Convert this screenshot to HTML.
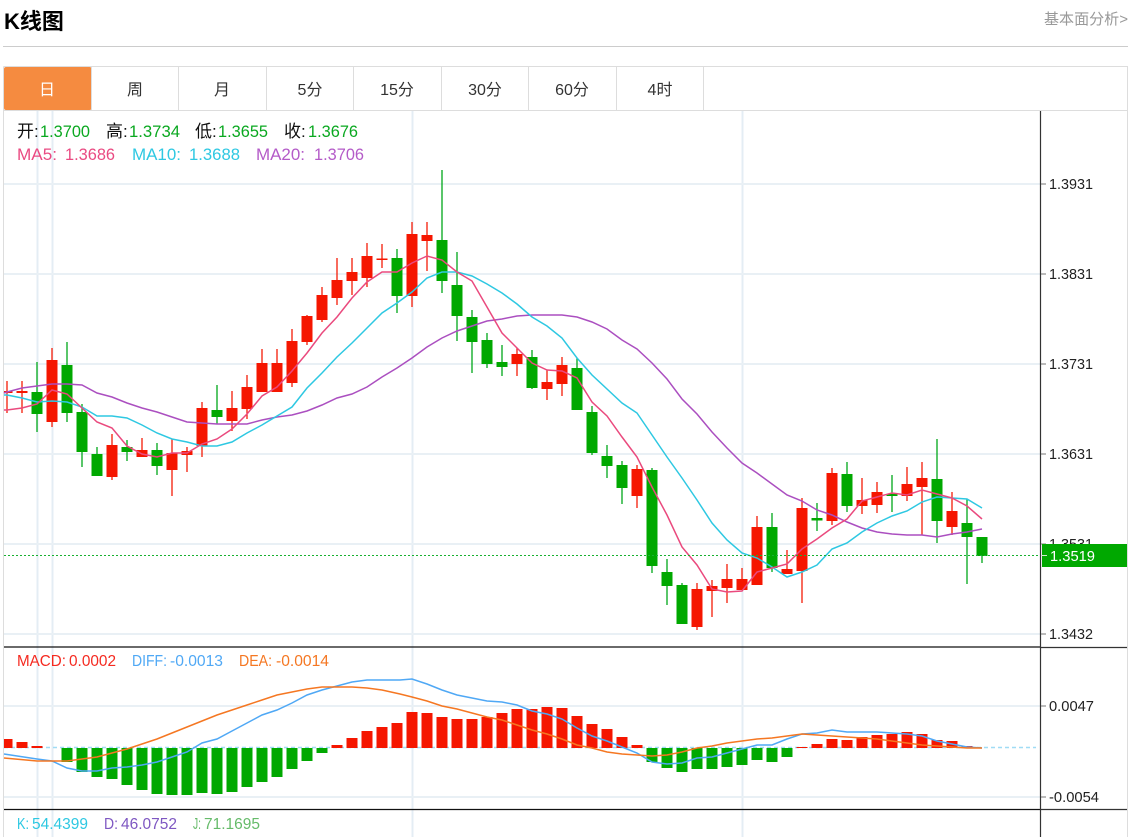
<!DOCTYPE html>
<html lang="zh">
<head>
<meta charset="utf-8">
<title>K线图</title>
<style>
html,body{margin:0;padding:0;background:#fff;width:1142px;height:837px;overflow:hidden}
svg{display:block;position:absolute;left:0;top:0}
text{font-family:"Liberation Sans","Noto Sans CJK SC",sans-serif}
.t{font-size:16px;fill:#333;text-anchor:middle}
.a{font-size:15px;fill:#222}
.r1{font-size:17px}
.m{font-size:16px}
.soft{filter:blur(.3px)}
</style>
</head>
<body>
<svg width="1142" height="837" viewBox="0 0 1142 837" xmlns="http://www.w3.org/2000/svg">
<!-- header -->
<text x="4" y="29" font-size="22" font-weight="700" fill="#000">K线图</text>
<text x="1044" y="24" font-size="15" fill="#999" textLength="84" lengthAdjust="spacingAndGlyphs">基本面分析&gt;</text>
<rect x="3" y="46" width="1125" height="1" fill="#ccc"/>

<!-- frame -->
<path d="M3.5 66.5H1127.5V837M3.5 66.5V837M4 110.5H1127" fill="none" stroke="#ddd" stroke-width="1"/>
<rect x="4" y="67" width="87.5" height="43" rx="2" fill="#f58b40"/>
<path d="M91.5 67V110M178.5 67V110M266.5 67V110M353.5 67V110M441.5 67V110M528.5 67V110M616.5 67V110M703.5 67V110" stroke="#ddd" stroke-width="1"/>
<text class="t" x="47" y="95" style="fill:#fff">日</text>
<text class="t" x="135" y="95">周</text>
<text class="t" x="222" y="95">月</text>
<text class="t" x="310" y="95">5分</text>
<text class="t" x="397" y="95">15分</text>
<text class="t" x="485" y="95">30分</text>
<text class="t" x="572" y="95">60分</text>
<text class="t" x="660" y="95">4时</text>

<!-- grid -->
<path d="M37.5 111V837M52.5 111V837M412.5 111V837M742.5 111V837" stroke="#e4edf4" stroke-width="2" fill="none"/>
<path d="M4 184H1040M4 274H1040M4 364H1040M4 454H1040M4 544H1040M4 634H1040M4 706H1040M4 797H1040" stroke="#e9f0f5" stroke-width="2" fill="none"/>

<g class="soft">
<!-- candles -->
<path fill="none" stroke="#f51c08" stroke-width="1.3" d="M7 381V413M22 381V413M52 348V427M112 434V480M142 438V457M172 439V496M187 447V472M202 402V457M232 391V431M247 375V419M262 349V392M277 349V392M292 329V387M307 315V345M322 287V322M337 258V305M352 258V295M367 243V287M382 244V268M412 222V307M427 222V271M517 348V376M547 370V400M562 357V396M637 465V508M697 583V630M712 580V617M727 564V603M742 568V590M757 516V585M787 550V574M802 498V603M832 468V525M862 478V514M877 482V513M907 467V501M922 462V535M952 492V535"/>
<path fill="none" stroke="#00a81a" stroke-width="1.3" d="M37 362V432M67 342V422M82 404V467M97 447V476M127 440V461M157 443V475M217 385V424M397 249V313M442 170V293M457 252V341M472 310V373M487 333V368M502 345V376M532 350V389M577 358V410M592 406V455M607 445V478M622 461V504M652 468V573M667 559V605M682 583V624M772 513V572M817 503V531M847 462V512M892 475V512M937 439V543M967 499V584M982 537V563"/>
<path fill="#f51600" d="M4 391h8.5v2h-8.5zM16.5 391h11v2h-11zM46.5 360h11v62h-11zM106.5 445h11v32h-11zM136.5 450h11v7h-11zM166.5 453h11v17h-11zM181.5 451h11v4h-11zM196.5 408h11v38h-11zM226.5 408h11v13h-11zM241.5 387h11v22h-11zM256.5 363h11v29h-11zM271.5 363h11v29h-11zM286.5 341h11v42h-11zM301.5 316h11v26h-11zM316.5 295h11v25h-11zM331.5 280h11v18h-11zM346.5 272h11v9h-11zM361.5 256h11v22h-11zM376.5 258.5h11v1.5h-11zM406.5 234h11v62h-11zM421.5 235h11v6h-11zM511.5 354h11v10h-11zM541.5 382h11v7h-11zM556.5 365h11v19h-11zM631.5 469h11v27h-11zM691.5 589h11v38h-11zM706.5 586h11v5h-11zM721.5 579h11v9h-11zM736.5 579h11v11h-11zM751.5 527h11v58h-11zM781.5 569h11v5h-11zM796.5 508h11v63h-11zM826.5 473h11v48h-11zM856.5 500h11v6h-11zM871.5 492h11v13h-11zM901.5 484h11v12h-11zM916.5 478h11v9h-11zM946.5 511h11v16h-11z"/>
<path fill="#00a800" d="M31.5 392h11v22h-11zM61.5 365h11v48h-11zM76.5 412h11v40h-11zM91.5 454h11v22h-11zM121.5 447h11v5h-11zM151.5 450h11v16h-11zM211.5 410h11v7h-11zM391.5 258h11v38h-11zM436.5 240h11v41h-11zM451.5 285h11v31h-11zM466.5 317h11v25h-11zM481.5 340h11v24h-11zM496.5 362h11v5h-11zM526.5 357h11v31h-11zM571.5 368h11v42h-11zM586.5 412h11v41h-11zM601.5 456h11v10h-11zM616.5 465h11v23h-11zM646.5 470h11v96h-11zM661.5 572h11v14h-11zM676.5 585h11v39h-11zM766.5 527h11v41h-11zM811.5 518h11v2.5h-11zM841.5 474h11v32h-11zM886.5 494h11v2h-11zM931.5 479h11v42h-11zM961.5 523h11v14h-11zM976.5 537h11v19h-11z"/>

<!-- MA lines -->
<polyline fill="none" stroke="#ab4fc0" stroke-width="1.5" points="4,393 7,392 22,388 37,386 52,384 67,384 82,385 97,393 112,397 127,403 142,408 157,412 172,417 187,422 202,423 217,424 232,424 247,424 262,420 277,417 292,415 307,411 322,405 337,398 352,394 367,387 382,377 397,368 412,358 427,347 442,338 457,331 472,326 487,321 502,319 517,316 532,315 547,315 562,315 577,317 592,322 607,329 622,340 637,349 652,363 667,379 682,399 697,414 712,432 727,448 742,463 757,473 772,484 787,495 802,501 817,510 832,515 847,522 862,528 877,532 892,534 907,535 922,535 937,537 952,534 967,532 982,529"/>
<polyline fill="none" stroke="#2ec8e2" stroke-width="1.5" points="4,395 7,395 22,398 37,402 52,401 67,402 82,407 97,416 112,416 127,418 142,425 157,433 172,439 187,442 202,446 217,446 232,442 247,433 262,425 277,416 292,407 307,388 322,373 337,357 352,343 367,328 382,313 397,303 412,292 427,278 442,272 457,272 472,276 487,284 502,293 517,304 532,317 547,326 562,338 577,358 592,375 607,389 622,403 637,413 652,435 667,457 682,478 697,500 712,523 727,540 742,553 757,558 772,567 787,577 802,572 817,565 832,549 847,543 862,532 877,523 892,516 907,511 922,502 937,497 952,498 967,499 982,508"/>
<polyline fill="none" stroke="#ea4a7e" stroke-width="1.5" points="4,410 7,410 22,408 37,404 52,390 67,394 82,408 97,422 112,428 127,446 142,454 157,457 172,453 187,453 202,444 217,439 232,429 247,414 262,396 277,387 292,371 307,353 322,333 337,317 352,298 367,282 382,272 397,272 412,263 427,256 442,260 457,272 472,281 487,307 502,333 517,348 532,363 547,370 562,371 577,378 592,402 607,416 622,437 637,457 652,487 667,515 682,547 697,565 712,589 727,592 742,591 757,572 772,568 787,564 802,549 817,539 832,528 847,519 862,501 877,497 892,493 907,495 922,490 937,494 952,498 967,506 982,519"/>

<!-- MACD -->
<path d="M4 747.5H1036" stroke="#a0dcf5" stroke-width="1.5" stroke-dasharray="4 3" fill="none"/>
<path fill="#f51600" d="M4 739h8.5V748H4zM16.5 742h11V748h-11zM31.5 746h11V748h-11zM331.5 745h11V748h-11zM346.5 738h11V748h-11zM361.5 731h11V748h-11zM376.5 727h11V748h-11zM391.5 723h11V748h-11zM406.5 712h11V748h-11zM421.5 713h11V748h-11zM436.5 717h11V748h-11zM451.5 719h11V748h-11zM466.5 719h11V748h-11zM481.5 717h11V748h-11zM496.5 713h11V748h-11zM511.5 709h11V748h-11zM526.5 709h11V748h-11zM541.5 707h11V748h-11zM556.5 708h11V748h-11zM571.5 716h11V748h-11zM586.5 724h11V748h-11zM601.5 729h11V748h-11zM616.5 737h11V748h-11zM631.5 745h11V748h-11zM796.5 747h11V748h-11zM811.5 744h11V748h-11zM826.5 739h11V748h-11zM841.5 740h11V748h-11zM856.5 737h11V748h-11zM871.5 735h11V748h-11zM886.5 734h11V748h-11zM901.5 732h11V748h-11zM916.5 734h11V748h-11zM931.5 740h11V748h-11zM946.5 741h11V748h-11zM961.5 746h11V748h-11z"/>
<path fill="#00a800" d="M61.5 748h11V762h-11zM76.5 748h11V772h-11zM91.5 748h11V777h-11zM106.5 748h11V779h-11zM121.5 748h11V785h-11zM136.5 748h11V790h-11zM151.5 748h11V794h-11zM166.5 748h11V795h-11zM181.5 748h11V795h-11zM196.5 748h11V793h-11zM211.5 748h11V794h-11zM226.5 748h11V792h-11zM241.5 748h11V787h-11zM256.5 748h11V782h-11zM271.5 748h11V777h-11zM286.5 748h11V769h-11zM301.5 748h11V761h-11zM316.5 748h11V753h-11zM646.5 748h11V762h-11zM661.5 748h11V768h-11zM676.5 748h11V772h-11zM691.5 748h11V769h-11zM706.5 748h11V769h-11zM721.5 748h11V767h-11zM736.5 748h11V765h-11zM751.5 748h11V760h-11zM766.5 748h11V762h-11zM781.5 748h11V757h-11z"/>
<polyline fill="none" stroke="#4fa8f5" stroke-width="1.5" points="4,754 37,759 52,761 67,768 82,771 97,771 112,768 127,767 142,765 157,762 172,757 187,752 202,743 217,739 232,731 247,723 262,715 277,710 292,703 307,695 322,690 337,686 352,682 367,680 382,680 400,680 412,679 427,684 442,690 457,695 472,698 487,701 502,702 517,705 532,711 547,714 562,719 577,728 592,736 607,741 622,747 637,753 652,762 667,764 682,763 697,758 712,757 727,753 742,749 757,745 772,745 787,739 802,734 817,733 832,730 847,732 862,732 877,732 892,733 907,734 922,736 937,741 952,744 967,747 982,748"/>
<polyline fill="none" stroke="#f57722" stroke-width="1.5" points="4,758 37,761 52,761 67,761 82,759 97,757 112,753 127,749 142,744 157,739 172,733 187,727 202,721 217,715 232,710 247,705 262,700 277,695 292,692 307,689 322,687 337,687 352,687 367,688 382,690 400,694 412,697 427,701 442,706 457,709 472,713 487,717 502,720 517,725 532,730 547,734 562,739 577,745 592,748 607,752 622,754 637,755 652,756 667,755 682,752 697,748 712,746 727,743 742,741 757,739 772,738 787,736 802,734 817,735 832,736 847,737 862,738 877,739 892,741 907,743 922,745 937,746 952,747 967,748 982,748"/>
</g>

<!-- current price dotted -->
<path d="M4 555.5H1040" stroke="#18b030" stroke-width="1" stroke-dasharray="2 2" fill="none"/>

<!-- legend -->
<g class="r1" lengthAdjust="spacingAndGlyphs">
<text x="17" y="137" fill="#111">开:</text><text x="40" y="137" fill="#0aa820" textLength="50" lengthAdjust="spacingAndGlyphs">1.3700</text>
<text x="106" y="137" fill="#111">高:</text><text x="129" y="137" fill="#0aa820" textLength="51" lengthAdjust="spacingAndGlyphs">1.3734</text>
<text x="195" y="137" fill="#111">低:</text><text x="218" y="137" fill="#0aa820" textLength="50" lengthAdjust="spacingAndGlyphs">1.3655</text>
<text x="284" y="137" fill="#111">收:</text><text x="308" y="137" fill="#0aa820" textLength="50" lengthAdjust="spacingAndGlyphs">1.3676</text>
<text x="17" y="160" fill="#ea4a82" textLength="40" lengthAdjust="spacingAndGlyphs">MA5:</text><text x="65" y="160" fill="#ea4a82" textLength="50" lengthAdjust="spacingAndGlyphs">1.3686</text>
<text x="132" y="160" fill="#2ec8e2" textLength="49" lengthAdjust="spacingAndGlyphs">MA10:</text><text x="189" y="160" fill="#2ec8e2" textLength="51" lengthAdjust="spacingAndGlyphs">1.3688</text>
<text x="256" y="160" fill="#b45bc8" textLength="49" lengthAdjust="spacingAndGlyphs">MA20:</text><text x="314" y="160" fill="#b45bc8" textLength="50" lengthAdjust="spacingAndGlyphs">1.3706</text>
</g>

<g class="m">
<text x="17" y="666" fill="#f52a20" textLength="49" lengthAdjust="spacingAndGlyphs">MACD:</text><text x="69" y="666" fill="#f52a20" textLength="47" lengthAdjust="spacingAndGlyphs">0.0002</text>
<text x="132" y="666" fill="#4fa8f5" textLength="35" lengthAdjust="spacingAndGlyphs">DIFF:</text><text x="170" y="666" fill="#4fa8f5" textLength="53" lengthAdjust="spacingAndGlyphs">-0.0013</text>
<text x="239" y="666" fill="#f57722" textLength="33" lengthAdjust="spacingAndGlyphs">DEA:</text><text x="276" y="666" fill="#f57722" textLength="53" lengthAdjust="spacingAndGlyphs">-0.0014</text>
<text x="17" y="829" fill="#2ec8e2" textLength="12" lengthAdjust="spacingAndGlyphs">K:</text><text x="32" y="829" fill="#2ec8e2" textLength="56" lengthAdjust="spacingAndGlyphs">54.4399</text>
<text x="104" y="829" fill="#7e57c2" textLength="14" lengthAdjust="spacingAndGlyphs">D:</text><text x="121" y="829" fill="#7e57c2" textLength="56" lengthAdjust="spacingAndGlyphs">46.0752</text>
<text x="193" y="829" fill="#66bb6a" textLength="8" lengthAdjust="spacingAndGlyphs">J:</text><text x="204" y="829" fill="#66bb6a" textLength="56" lengthAdjust="spacingAndGlyphs">71.1695</text>
</g>

<!-- axis -->
<path d="M4 647H1040M4 809.5H1040" stroke="#111" stroke-width="1.2" fill="none"/>
<path d="M1040 647.5H1127M1040 809.5H1127" stroke="#333" stroke-width="1.2" fill="none"/>
<path d="M1040.5 111V837" stroke="#333" stroke-width="1.2" fill="none"/>
<path d="M1041 184H1046M1041 274H1046M1041 364H1046M1041 454H1046M1041 544H1046M1041 634H1046M1041 706H1046M1041 797H1046" stroke="#777" stroke-width="1" fill="none"/>
<text class="a" x="1049" y="189" textLength="44" lengthAdjust="spacingAndGlyphs">1.3931</text>
<text class="a" x="1049" y="279" textLength="44" lengthAdjust="spacingAndGlyphs">1.3831</text>
<text class="a" x="1049" y="369" textLength="44" lengthAdjust="spacingAndGlyphs">1.3731</text>
<text class="a" x="1049" y="459" textLength="44" lengthAdjust="spacingAndGlyphs">1.3631</text>
<text class="a" x="1049" y="549" textLength="44" lengthAdjust="spacingAndGlyphs">1.3531</text>
<text class="a" x="1049" y="639" textLength="44" lengthAdjust="spacingAndGlyphs">1.3432</text>
<text class="a" x="1049" y="711" textLength="45" lengthAdjust="spacingAndGlyphs">0.0047</text>
<text class="a" x="1049" y="802" textLength="50" lengthAdjust="spacingAndGlyphs">-0.0054</text>
<rect x="1042" y="544" width="85" height="23" fill="#00a800"/>
<path d="M1041 555.5H1047" stroke="#cfeccf" stroke-width="1"/>
<text x="1050" y="561" font-size="15" fill="#fff" textLength="45" lengthAdjust="spacingAndGlyphs">1.3519</text>
</svg>
</body>
</html>
